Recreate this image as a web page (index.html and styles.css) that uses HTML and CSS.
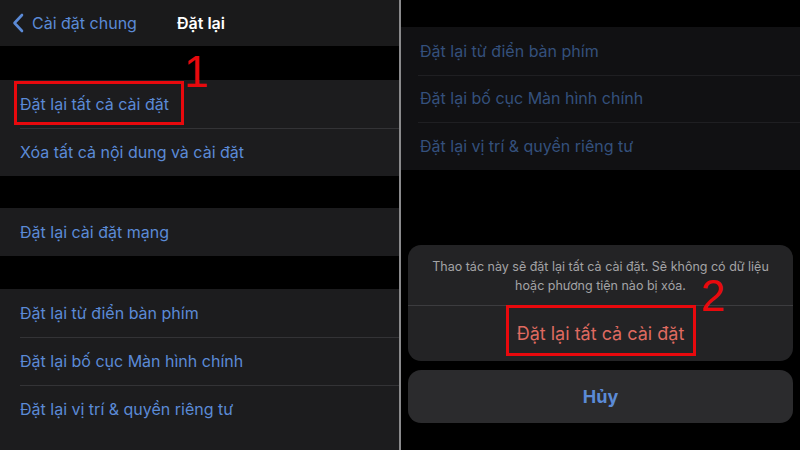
FILE: index.html
```html
<!DOCTYPE html>
<html lang="vi">
<head>
<meta charset="utf-8">
<link rel="stylesheet" href="styles.css">
</head>
<body>
<div class="screen">
  <section class="pane left">
    <header class="nav">
      <div class="back">
        <svg class="chev" width="12" height="20" viewBox="0 0 12 20"><path d="M10 2 L2.5 10 L10 18" fill="none" stroke="#5b8ad6" stroke-width="2.6" stroke-linecap="round" stroke-linejoin="round"/></svg>
        <span>Cài đặt chung</span>
      </div>
      <div class="title">Đặt lại</div>
    </header>
    <div class="gap g1"></div>
    <div class="group">
      <div class="row marked">Đặt lại tất cả cài đặt<span class="box box1"></span><span class="num num1">1</span></div>
      <div class="row">Xóa tất cả nội dung và cài đặt</div>
    </div>
    <div class="gap g2"></div>
    <div class="group">
      <div class="row">Đặt lại cài đặt mạng</div>
    </div>
    <div class="gap g3"></div>
    <div class="group grow">
      <div class="row">Đặt lại từ điển bàn phím</div>
      <div class="row">Đặt lại bố cục Màn hình chính</div>
      <div class="row">Đặt lại vị trí &amp; quyền riêng tư</div>
    </div>
  </section>
  <div class="divider"></div>
  <section class="pane right">
    <div class="rtop"></div>
    <div class="rgroup">
      <div class="rrow">Đặt lại từ điển bàn phím</div>
      <div class="rrow">Đặt lại bố cục Màn hình chính</div>
      <div class="rrow">Đặt lại vị trí &amp; quyền riêng tư</div>
    </div>
    <div class="spacer"></div>
    <div class="sheet">
      <div class="msg">Thao tác này sẽ đặt lại tất cả cài đặt. Sẽ không có dữ liệu hoặc phương tiện nào bị xóa.</div>
      <div class="action"><span class="act-text">Đặt lại tất cả cài đặt<span class="box box2"></span><span class="num num2">2</span></span></div>
    </div>
    <div class="cancel">Hủy</div>
  </section>
</div>
</body>
</html>
```
FILE: styles.css
```css
* { box-sizing: border-box; }
html, body { margin: 0; padding: 0; background: #000; }
body { width: 800px; height: 450px; overflow: hidden; font-family: Inter, "Noto Sans", "Liberation Sans", sans-serif; }
.screen { display: flex; width: 800px; height: 450px; }
.pane { display: flex; flex-direction: column; }
.left { width: 399px; background: #000; }
.nav { height: 46px; background: #1a1a1b; display: flex; align-items: center; padding-left: 12px; position: relative; }
.back { display: flex; align-items: center; gap: 8px; color: #5b8ad6; font-size: 16px; }
.chev { display: block; }
.title { position: absolute; left: 177px; top: 13px; color: #fff; font-size: 16px; font-weight: 600; }
.gap { background: #000; }
.g1 { height: 34px; }
.g2 { height: 32px; }
.g3 { height: 33px; }
.group { background: #1c1c1e; }
.group.grow { flex: 1; }
.row { height: 48px; display: flex; align-items: center; padding-left: 20px; color: #5b8ad6; font-size: 16px; position: relative; }
.row + .row::before { content: ""; position: absolute; left: 20px; right: 0; top: 0; height: 1px; background: #333336; }
.divider { width: 2px; background: #8a8a8c; }
.right { flex: 1; background: #000; padding-bottom: 27px; }
.rtop { height: 27px; }
.rgroup { background: #111113; }
.rrow { height: 47.5px; display: flex; align-items: center; padding-left: 19px; color: #34507c; font-size: 16px; position: relative; }
.rrow + .rrow::before { content: ""; position: absolute; left: 17px; right: 0; top: 0; height: 1px; background: #1f1f22; }
.spacer { flex: 1; }
.sheet { margin: 0 7px 0 7px; background: #232325; border-radius: 13px; }
.msg { height: 61px; padding: 12px 24px 0; text-align: center; color: #a3a3a6; font-size: 12.5px; line-height: 19px; border-bottom: 1px solid #3c3c3f; }
.action { height: 55px; display: flex; align-items: center; justify-content: center; }
.act-text { position: relative; color: #df6a60; font-size: 18px; }
.cancel { margin: 9px 7px 0; height: 53px; background: #2b2b2d; border-radius: 13px; display: flex; align-items: center; justify-content: center; color: #5b8ad6; font-size: 18px; font-weight: 700; }
.box { position: absolute; border: 3px solid #e8090d; }
.box1 { left: 14px; top: 1px; width: 170px; height: 44px; }
.box2 { left: -11px; top: -18px; width: 190px; height: 51px; }
.num { position: absolute; color: #e8090d; font-family: "Liberation Sans", sans-serif; font-size: 44px; line-height: 32px; }
.num1 { left: 184px; top: -24px; }
.num2 { left: 184px; top: -43px; }
```
